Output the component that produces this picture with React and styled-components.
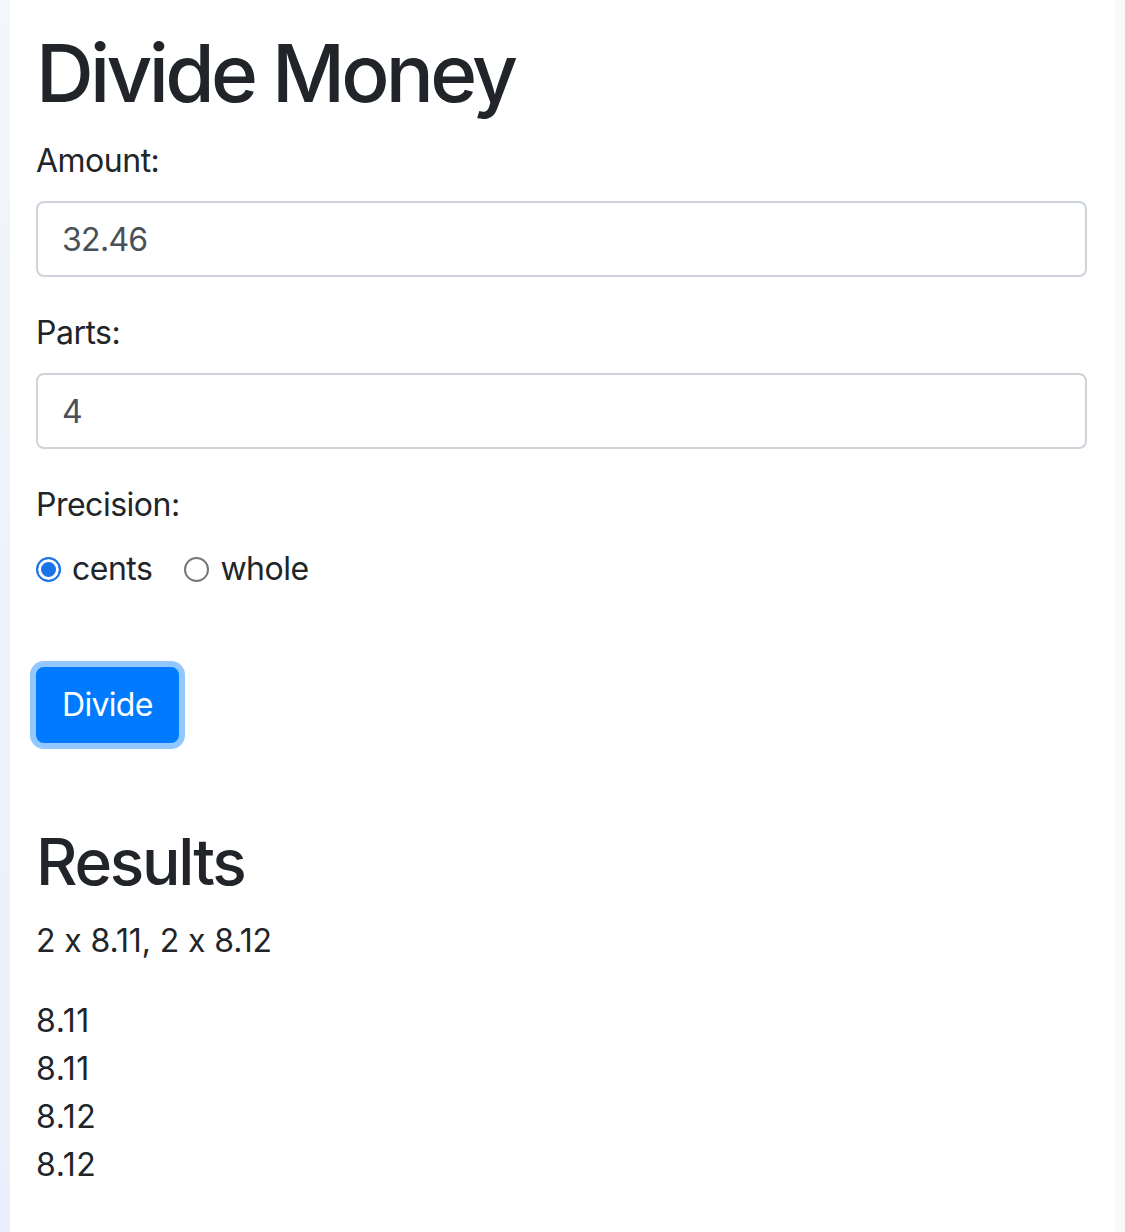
import React, { useState } from 'react';
import styled, { createGlobalStyle } from 'styled-components';

const GlobalStyle = createGlobalStyle`
	* { box-sizing: border-box; }
	html, body { margin: 0; padding: 0; background: #ffffff; }
	body {
		font-family: 'Inter', 'Liberation Sans', sans-serif;
		font-feature-settings: 'calt' 0;
		color: #212529;
		font-size: 32px;
		line-height: 1.5;
		letter-spacing: -0.5px;
	}
`;

const Page = styled.div`
	display: flex;
	min-height: 1232px;
	background: #ffffff;
`;

const EdgeLeft = styled.div`
	width: 10px;
	flex-shrink: 0;
	background: linear-gradient(180deg, #f3f6fb 0%, #e9f0fb 100%);
`;

const EdgeRight = styled.div`
	width: 10px;
	flex-shrink: 0;
	background: #fafafb;
`;

const Container = styled.main`
	flex: 1;
	padding: 25px 28px 40px 26px;
`;

const Title = styled.h1`
	margin: 0 0 16px;
	font-size: 80px;
	font-weight: 500;
	line-height: 1.2;
	letter-spacing: -3.7px;
`;

const Subtitle = styled.h2`
	margin: 0 0 16px;
	font-size: 64px;
	font-weight: 500;
	line-height: 1.2;
	letter-spacing: -2.2px;
`;

const Group = styled.div`
	margin-bottom: ${(p) => p.$gap || 32}px;
`;

const Label = styled.label`
	display: block;
	margin-bottom: 16px;
	font-size: 32px;
	line-height: 48px;
`;

const Input = styled.input`
	display: block;
	width: 100%;
	height: 76px;
	padding: 12px 24px;
	font-family: inherit;
	font-feature-settings: 'calt' 0;
	font-size: 32px;
	line-height: 48px;
	letter-spacing: -0.7px;
	color: #495057;
	background: #ffffff;
	border: 2px solid #ced4da;
	border-radius: 8px;
	outline: none;
`;

const RadioRow = styled.div`
	display: flex;
	align-items: center;
	height: 48px;
`;

const RadioOption = styled.label`
	display: inline-flex;
	align-items: center;
	margin-right: 32px;
	cursor: pointer;
`;

const RadioDot = styled.span`
	width: 25px;
	height: 25px;
	margin-right: 11px;
	border-radius: 50%;
	flex-shrink: 0;
	border: ${(p) => (p.$checked ? '2px solid #1a73e8' : '2px solid #767676')};
	background: ${(p) => (p.$checked ? '#1a73e8' : '#ffffff')};
	box-shadow: ${(p) => (p.$checked ? 'inset 0 0 0 3px #ffffff' : 'none')};
`;

const Button = styled.button`
	display: inline-block;
	padding: 12px 24px;
	font-family: inherit;
	font-size: 32px;
	line-height: 48px;
	letter-spacing: -0.7px;
	color: #ffffff;
	background: #007bff;
	border: 2px solid #007bff;
	border-radius: 8px;
	box-shadow: 0 0 0 6px rgba(38, 143, 255, 0.5);
	cursor: pointer;
`;

const Text = styled.p`
	margin: 0 0 32px;
	letter-spacing: -0.1px;
`;

const Line = styled.div`
	line-height: 48px;
	letter-spacing: 0.6px;
`;

const divide = (amount, parts, whole) => {
	const unit = whole ? 1 : 100;
	const total = Math.round(amount * unit);
	const base = Math.floor(total / parts);
	const extra = total - base * parts;
	const list = [];
	for (let i = 0; i < parts; i++) {
		list.push((i < parts - extra ? base : base + 1) / unit);
	}
	return list;
};

const fmt = (n, whole) => (whole ? String(n) : n.toFixed(2));

const App = () => {
	const [amount, setAmount] = useState('32.46');
	const [parts, setParts] = useState('4');
	const [whole, setWhole] = useState(false);

	const list = divide(parseFloat(amount) || 0, parseInt(parts, 10) || 1, whole);
	const counts = [];
	list.forEach((v) => {
		const last = counts[counts.length - 1];
		if (last && last.v === v) last.n += 1;
		else counts.push({ v, n: 1 });
	});
	const summary = counts.map((c) => `${c.n} x ${fmt(c.v, whole)}`).join(', ');

	return (
		<Page>
			<GlobalStyle />
			<EdgeLeft />
			<Container>
				<Title>Divide Money</Title>
				<Group>
					<Label htmlFor="amount">Amount:</Label>
					<Input id="amount" value={amount} onChange={(e) => setAmount(e.target.value)} />
				</Group>
				<Group>
					<Label htmlFor="parts">Parts:</Label>
					<Input id="parts" value={parts} onChange={(e) => setParts(e.target.value)} />
				</Group>
				<Group $gap={74}>
					<Label>Precision:</Label>
					<RadioRow>
						<RadioOption onClick={() => setWhole(false)}>
							<RadioDot $checked={!whole} />
							cents
						</RadioOption>
						<RadioOption onClick={() => setWhole(true)}>
							<RadioDot $checked={whole} />
							whole
						</RadioOption>
					</RadioRow>
				</Group>
				<Group $gap={81}>
					<Button>Divide</Button>
				</Group>
				<Subtitle>Results</Subtitle>
				<Text>{summary}</Text>
				{list.map((v, i) => (
					<Line key={i}>{fmt(v, whole)}</Line>
				))}
			</Container>
			<EdgeRight />
		</Page>
	);
};

export default App;
